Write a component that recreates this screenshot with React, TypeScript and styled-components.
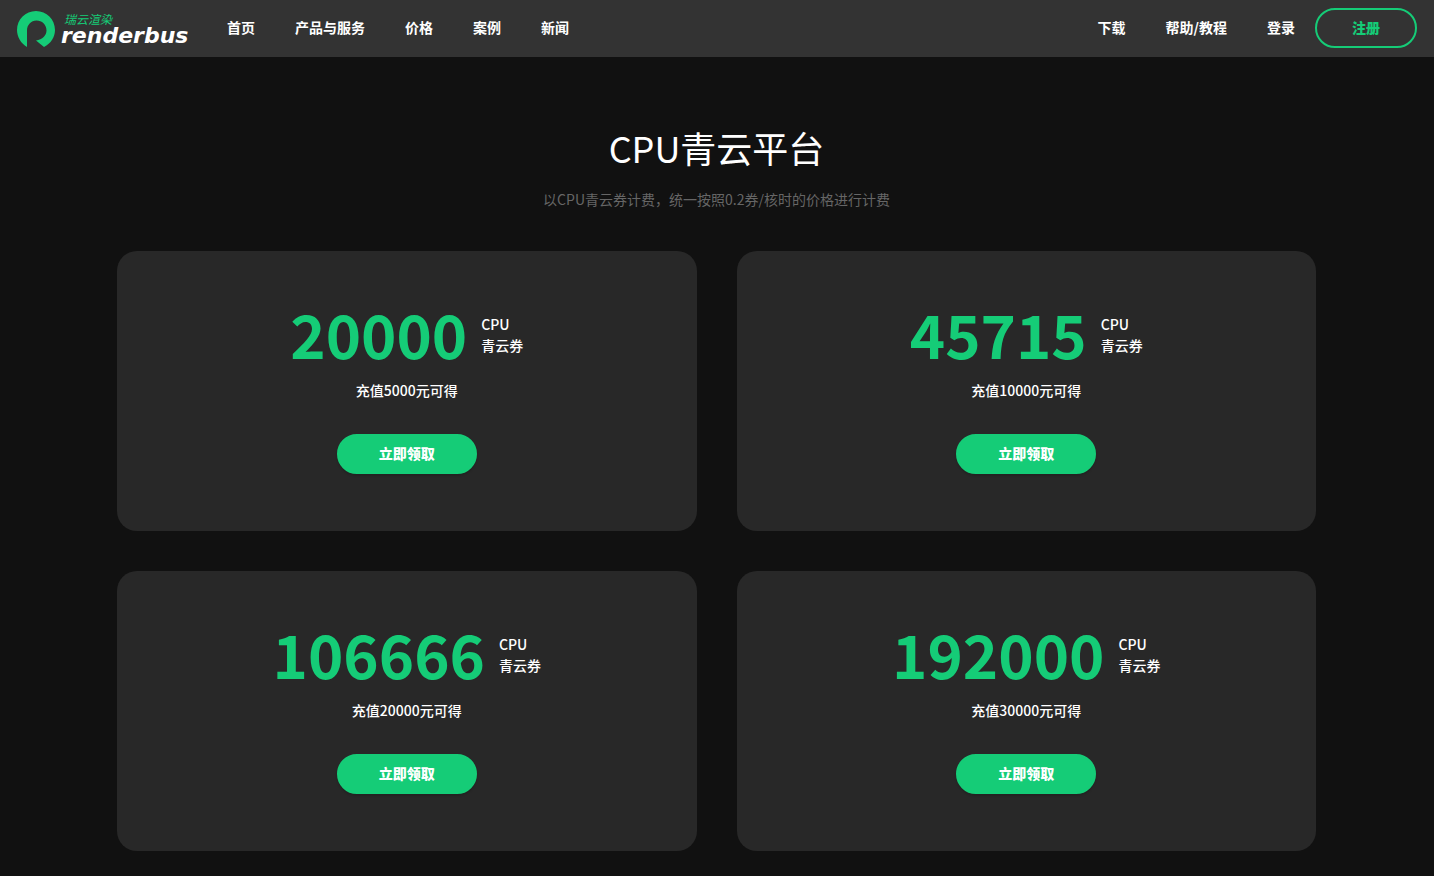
import React from 'react';
import styled, { createGlobalStyle } from 'styled-components';

const GREEN = '#15cc77';

const GlobalStyle = createGlobalStyle`
  *, *::before, *::after { box-sizing: border-box; }
  body {
    margin: 0;
    background: #111;
    color: #fff;
    font-family: 'Noto Sans CJK SC', 'Noto Sans', sans-serif;
    font-size: 14px;
    line-height: 21px;
  }
  h1, p { margin: 0; }
`;

const Header = styled.header`
  display: flex;
  align-items: center;
  height: 57px;
  padding: 0 17px;
  background: #333;
`;

const Logo = styled.a`
  display: flex;
  align-items: center;
  gap: 6px;
  width: 190px;
  padding-top: 1px;
  color: #fff;
  text-decoration: none;
`;

const LogoWords = styled.span`
  display: flex;
  flex-direction: column;
  gap: 2px;
  padding-bottom: 1px;
  font-style: italic;
  white-space: nowrap;
`;

const LogoChinese = styled.span`
  padding-left: 3px;
  color: ${GREEN};
  font-size: 12px;
  font-weight: 400;
  line-height: 12px;
`;

const LogoLatin = styled.span`
  font-family: 'DejaVu Sans', sans-serif;
  font-size: 22px;
  font-weight: 700;
  line-height: 18px;
`;

const Nav = styled.nav`
  display: flex;
  align-items: center;
  padding-bottom: 1px;
`;

const NavLink = styled.a`
  padding: 0 20px 1px;
  color: #fff;
  font-weight: 700;
  text-decoration: none;
`;

const RightNav = styled(Nav)`
  margin-left: auto;
`;

const PillButton = styled.button<{ $outline?: boolean }>`
  width: ${(p) => (p.$outline ? 102 : 140)}px;
  height: 40px;
  padding: 0 0 1px;
  border: 2px solid ${GREEN};
  border-radius: 20px;
  background: ${(p) => (p.$outline ? 'transparent' : GREEN)};
  color: ${(p) => (p.$outline ? GREEN : '#fff')};
  font: inherit;
  font-weight: 900;
  cursor: pointer;
  box-shadow: 0 2px 2px rgba(0, 0, 0, ${(p) => (p.$outline ? 0 : 0.15)});
`;

const Main = styled.main`
  max-width: 1240px;
  margin: 0 auto;
  padding: 63px 21px 25px 20px;
`;

const Title = styled.h1`
  font-size: 36px;
  font-weight: 400;
  line-height: 54px;
  text-align: center;
`;

const Subtitle = styled.p`
  margin: 15px 0 41px;
  color: #666;
  text-align: center;
`;

const Cards = styled.div`
  display: grid;
  grid-template-columns: 1fr 1fr;
  gap: 40px;
`;

const Card = styled.section`
  display: flex;
  flex-direction: column;
  align-items: center;
  min-height: 280px;
  padding: 40px 20px;
  border-radius: 20px;
  background: #282828;
  font-weight: 500;
`;

const Amount = styled.div`
  display: flex;
  align-items: flex-start;
  gap: 14px;
  height: 89px;
`;

const AmountValue = styled.strong`
  color: ${GREEN};
  font-size: 60px;
  font-weight: 700;
  line-height: 84px;
`;

const AmountUnit = styled.span`
  display: flex;
  flex-direction: column;
  padding-top: 23px;
`;

const Condition = styled.p`
  margin-bottom: 33px;
`;

const leftLinks = ['首页', '产品与服务', '价格', '案例', '新闻'];
const rightLinks = ['下载', '帮助/教程', '登录'];

const offers = [
  { coupons: 20000, price: 5000 },
  { coupons: 45715, price: 10000 },
  { coupons: 106666, price: 20000 },
  { coupons: 192000, price: 30000 },
];

function LogoMark() {
  return (
    <svg width="38" height="36" viewBox="0 0 38 36" aria-hidden="true">
      <path
        fill={GREEN}
        d="M10 36C4 32.500 0 26 0 19C0 8.500 8.500 0 19 0S38 8.500 38 19C38 26 34 32.500 27 36L19 29.500C25.500 28.500 29.500 24.500 29.500 19.500C29.500 13.500 25 9.500 19.500 9.500S10 14 10 19.500Z"
      />
    </svg>
  );
}

export default function App() {
  return (
    <>
      <GlobalStyle />
      <Header>
        <Logo href="#">
          <LogoMark />
          <LogoWords>
            <LogoChinese>瑞云渲染</LogoChinese>
            <LogoLatin>renderbus</LogoLatin>
          </LogoWords>
        </Logo>
        <Nav>
          {leftLinks.map((label) => (
            <NavLink key={label} href="#">{label}</NavLink>
          ))}
        </Nav>
        <RightNav>
          {rightLinks.map((label) => (
            <NavLink key={label} href="#">{label}</NavLink>
          ))}
          <PillButton $outline type="button">注册</PillButton>
        </RightNav>
      </Header>
      <Main>
        <Title>CPU青云平台</Title>
        <Subtitle>以CPU青云券计费，统一按照0.2券/核时的价格进行计费</Subtitle>
        <Cards>
          {offers.map(({ coupons, price }) => (
            <Card key={coupons}>
              <Amount>
                <AmountValue>{coupons}</AmountValue>
                <AmountUnit>
                  <span>CPU</span>
                  <span>青云券</span>
                </AmountUnit>
              </Amount>
              <Condition>充值{price}元可得</Condition>
              <PillButton type="button">立即领取</PillButton>
            </Card>
          ))}
        </Cards>
      </Main>
    </>
  );
}
